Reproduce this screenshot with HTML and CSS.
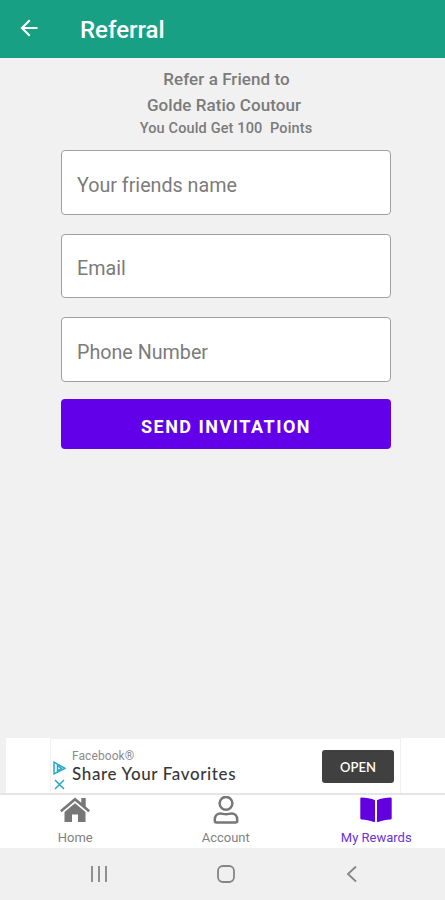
FILE: index.html
```html
<!DOCTYPE html>
<html lang="en">
<head>
<meta charset="utf-8">
<title>Referral</title>
<link rel="stylesheet" href="styles.css">
</head>
<body>
<div class="screen">
  <header class="app-bar">
    <svg class="back" width="18" height="18" viewBox="0 0 18 18"><path d="M17.5 9H2M9.700 1.200 1.900 9l7.800 7.800"/></svg>
    <h1><span>Referral</span></h1>
  </header>
  <main>
    <div class="intro">
      <p class="lead"><span>Refer a Friend to</span></p>
      <p class="shop"><span>Golde Ratio Coutour</span></p>
      <p class="points"><span>You Could Get 100&nbsp; Points</span></p>
    </div>
    <form class="form">
      <div class="field name"><span>Your friends name</span></div>
      <div class="field email"><span>Email</span></div>
      <div class="field phone"><span>Phone Number</span></div>
      <button type="button" class="send"><span>SEND INVITATION</span></button>
    </form>
  </main>
  <aside class="ad">
    <div class="ad-card">
      <div class="ad-marks">
        <svg width="13" height="14" viewBox="0 0 13 14"><path d="M1 1.2v11.6L12 7.4Z"/><path d="M4.5 4.3v5.8l4-2.7z"/></svg>
        <svg width="11" height="11" viewBox="0 0 11 11"><path d="m1 1 9 9m0-9-9 9"/></svg>
      </div>
      <div class="ad-copy">
        <div class="brand"><span>Facebook®</span></div>
        <div class="tagline"><span>Share Your Favorites</span></div>
      </div>
      <div class="open"><span>OPEN</span></div>
    </div>
  </aside>
  <nav class="tabs">
    <div class="tab">
      <svg width="32" height="28" viewBox="0 0 32 28"><path d="M16 1.5 1 14.2l1.6 2L16 5l13.4 11.2 1.6-2-4.3-3.7V2h-4.4v4.8Z"/><path d="M16 7.3 5.5 16v10H13v-7.5h6V26h7.5V16Z"/></svg>
      <span class="home">Home</span>
    </div>
    <div class="tab">
      <svg class="line" width="32" height="28" viewBox="0 0 32 28"><circle cx="16" cy="7.3" r="6.4"/><path d="M6.500 26.500q-1.700 0-1.700-1.700v-1.300c0-3.600 2.400-6 5.500-6 2.200 0 3 .8 5.700.8s3.500-.8 5.700-.8c3.100 0 5.500 2.400 5.500 6v1.300q0 1.700-1.700 1.700Z"/></svg>
      <span class="account">Account</span>
    </div>
    <div class="tab active">
      <svg width="32" height="28" viewBox="0 0 32 28"><path d="M15 4.200C11.700 2.500 5.500 1.700 1.400 1.600Q.3 1.600.3 2.700v19.500q0 1.100 1.100 1.200c4.200.2 8.800.8 12.200 2.500.8.400 1.400.1 1.400-.7ZM17 4.200c3.300-1.700 9.500-2.500 13.600-2.600q1.100 0 1.100 1.100v19.500q0 1.100-1.100 1.200c-4.200.2-8.800.8-12.200 2.500-.8.400-1.400.1-1.400-.7Z"/></svg>
      <span class="rewards">My Rewards</span>
    </div>
  </nav>
  <footer class="system">
    <svg width="18" height="18" viewBox="0 0 18 18"><path d="M2 1v16M9 1v16M16 1v16"/></svg>
    <svg width="18" height="18" viewBox="0 0 18 18"><rect x="1" y="1" width="16" height="16" rx="5"/></svg>
    <svg width="18" height="18" viewBox="0 0 18 18"><path d="M13 1.500 5 9l8 7.500"/></svg>
  </footer>
</div>
</body>
</html>
```

FILE: styles.css
```css
* { box-sizing: border-box; }
body { margin: 0; background: #f1f1f1; font-family: Roboto, sans-serif; color: #7b7b7b; }
h1, p { margin: 0; }
span { white-space: pre; }
.screen { width: 445px; height: 900px; display: flex; flex-direction: column; overflow: hidden; }

.app-bar { height: 58px; flex: none; background: #18a085; display: flex; align-items: center; padding: 2px 0 0 20px; color: #fff; }
.back { fill: none; stroke: #fff; stroke-width: 2; margin-top: -4px; }
h1 { margin-left: 42px; font-size: 24px; line-height: 30px; font-weight: 500; }

main { flex: 1; }
.intro { padding-top: 8px; text-align: center; font-weight: 500; }
.lead, .shop { font-size: 17px; line-height: 26px; padding-left: 8px; letter-spacing: .06px; }
.shop { padding-left: 3px; }
.points { font-size: 14.500px; line-height: 20px; padding: 1px 0 0 7px; letter-spacing: .15px; }

.form { margin: 11px 54px 0 61px; display: flex; flex-direction: column; }
.field { height: 65px; margin-bottom: 18px; padding: 6px 0 0 15px; border: 1.500px solid #a0a0a0; border-radius: 4px; background: #fff; display: flex; align-items: center; font-size: 19.700px; color: #7b7b7b; }
.email { margin: 1px 0 19px; height: 64px; padding-top: 4px; }
.phone { margin-bottom: 17px; }
.send { height: 50px; padding: 4px 0 0; border: 0; border-radius: 4px; background: #6200ea; color: #fff; font: 700 18px Roboto, sans-serif; letter-spacing: 1.500px; }

.ad { height: 55px; flex: none; margin-left: 6px; padding-left: 44px; background: #fff; }
.ad-card { width: 351px; height: 55px; border: solid #f1f1f1; border-width: 1px 1px 0; display: flex; }
.ad-marks { width: 21px; padding-top: 22px; display: flex; flex-direction: column; align-items: center; gap: 4px; padding-right: 4px; }
.ad-marks svg { flex: none; fill: none; stroke: #25a9c9; stroke-width: 1.500; }
.ad-copy { flex: 1; padding-top: 9px; }
.brand { font: 12px/16px Roboto, sans-serif; color: #8b8b8b; letter-spacing: .08px; }
.tagline { font: 500 17px/20px Lato, sans-serif; color: #383838; letter-spacing: .63px; }
.open { width: 72px; height: 33px; margin: 11px 6px 0 0; border-radius: 3px; background: #404040; color: #fff; display: flex; align-items: center; justify-content: center; font: 600 13px Lato, sans-serif; }

.tabs { height: 55px; flex: none; background: #fff; border-top: 2px solid #e5e5e5; display: grid; grid-template-columns: repeat(3, 150.500px); }
.tab { display: flex; flex-direction: column; align-items: center; padding-top: 1px; font-size: 13px; line-height: 17px; color: #828282; }
.tab svg { fill: #777; }
.tab svg.line { fill: none; stroke: #777; stroke-width: 2.500; }
.tab span { margin-top: 5px; }
.tab.active { color: #6a32d8; }
.tab.active svg { fill: #6200e0; }

.system { height: 52px; flex: none; background: #f0f0f0; display: flex; align-items: center; padding-left: 90px; gap: 108.500px; }
.system svg { fill: none; stroke: #858585; stroke-width: 1.800; }
```
